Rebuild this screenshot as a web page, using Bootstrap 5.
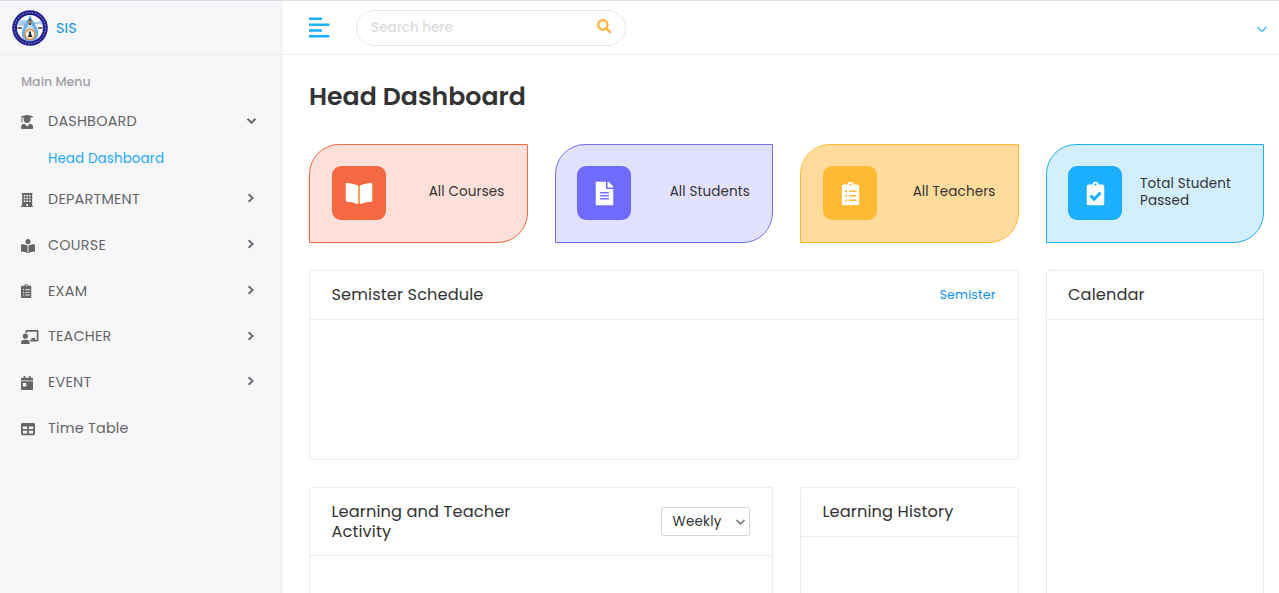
<!DOCTYPE html>
<html lang="en">
<head>
<meta charset="utf-8">
<meta name="viewport" content="width=device-width, initial-scale=1">
<title>SIS - Head Dashboard</title>
<link href="https://cdn.jsdelivr.net/npm/bootstrap@5.3.0/dist/css/bootstrap.min.css" rel="stylesheet">
<style>
body{font-family:Poppins,Inter,sans-serif;font-size:14.4px;color:#333;height:100vh;overflow:hidden;border-top:1px solid #d6e1ec}
a{text-decoration:none}
svg{display:block;flex:none}
.side{width:282px;background:#f7f7fa;border-right:1px solid #e9e9ee;color:#6f6f6f}
.brand-bar,.top-bar{height:54px;border-bottom:1px solid #eeeef2}
.brand-bar{padding-left:12px}
.brand-bar a{color:#0f94e8;margin:2px 0 0 8px;letter-spacing:.15px}
.menu-title{font-size:12.6px;font-weight:500;color:#a0a0a3;padding:17px 0 0 21px;height:43.7px;line-height:20px}
.menu-item{height:45.75px;padding:0 24px 0 21px;color:#666;letter-spacing:.21px}
.menu-item .ico{width:27px}
.menu-item .ico svg{height:14px;margin-top:0}
.menu-item .arrow{margin:-3px 1px 0 auto}
.menu-item .arrow.open{margin:-2px 0 0 auto}
.sub-item{height:32.5px;padding:4px 0 0 48px;color:#1eaaff;font-size:13.5px;line-height:21px;letter-spacing:.08px}
.top-bar{padding:0 11px 0 27px}
.search-box{width:270px;height:36px;border:1px solid #e6e6e6;border-radius:18px;margin-left:26px;padding:0 14px}
.search-box input{font-size:13.5px;font-weight:500;width:200px;margin-top:1px}
.search-box svg{margin-top:-2px}
.search-box input::placeholder{color:#dcdcdc;opacity:1}
.page-body{padding:0 15px 0 27px}
h1{font-size:25.2px;font-weight:600;line-height:30px;margin:27px 0 32px}
.grid-row{--bs-gutter-x:27px}
.stat{height:99px;border:1px solid;border-radius:30px 0;padding:0 22px 0 21.5px;margin-bottom:27px}
.stat .tile{width:54px;height:54px;border-radius:9px;flex:none;margin-top:-1px}
.stat .tile svg{transform:translate(.5px,.5px)}
.stat .label{font-size:13.5px;line-height:16.2px;color:#333;margin-top:-2px;letter-spacing:.12px}
.stat .label.two-line{margin-left:18px}
.s-red{background:#fde0d9;border-color:#f46b45}.s-red .tile{background:#f46842}
.s-violet{background:#e2e1ff;border-color:#7370f5}.s-violet .tile{background:#6f6bff}
.s-amber{background:#ffdc9b;border-color:#ffba35}.s-amber .tile{background:#ffba35}
.s-blue{background:#d2eeff;border-color:#1eb0f8}.s-blue .tile{background:#1aafff}
.panel{border:1px solid #ebebf3;border-radius:3px;background:#fff;margin-bottom:27px}
.panel-head{border-bottom:1px solid #ebebf0;padding:14px 22px 14px 21.5px;font-size:16.2px;line-height:20px;letter-spacing:.12px}
.panel-head a{font-size:12.6px;color:#1090ee}
.sched{height:190px}.cal{height:340px}.act,.hist{height:150px}
.act .panel-head{padding-bottom:13px}
.pick{width:89px;height:29px;border:1px solid #d9d9d9;border-radius:2px;padding:0 3px 0 10.5px;font-size:13.5px;letter-spacing:.2px;margin-top:-1px}
</style>
</head>
<body class="d-flex">
<svg width="0" height="0" class="position-absolute">
<symbol id="chev" viewBox="0 0 10 10"><path d="M2.6 1.2 6.6 5 2.6 8.8" fill="none" stroke="#6b6f73" stroke-width="2"/></symbol>
<symbol id="cliplist" viewBox="0 0 384 512"><path d="M336 64h-80c0-35.3-28.7-64-64-64s-64 28.7-64 64H48C21.5 64 0 85.5 0 112v352c0 26.5 21.5 48 48 48h288c26.5 0 48-21.5 48-48V112c0-26.5-21.5-48-48-48zM96 424c-13.3 0-24-10.7-24-24s10.7-24 24-24 24 10.7 24 24-10.7 24-24 24zm0-96c-13.3 0-24-10.7-24-24s10.7-24 24-24 24 10.7 24 24-10.7 24-24 24zm0-96c-13.3 0-24-10.7-24-24s10.7-24 24-24 24 10.7 24 24-10.7 24-24 24zm96-192c13.3 0 24 10.7 24 24s-10.7 24-24 24-24-10.7-24-24 10.7-24 24-24zm128 368c0 4.4-3.6 8-8 8H168c-4.4 0-8-3.6-8-8v-16c0-4.4 3.6-8 8-8h144c4.4 0 8 3.6 8 8v16zm0-96c0 4.4-3.6 8-8 8H168c-4.4 0-8-3.6-8-8v-16c0-4.4 3.6-8 8-8h144c4.4 0 8 3.6 8 8v16zm0-96c0 4.4-3.6 8-8 8H168c-4.4 0-8-3.6-8-8v-16c0-4.4 3.6-8 8-8h144c4.4 0 8 3.6 8 8v16z"/></symbol>
</svg>

<aside class="side flex-shrink-0">
  <div class="brand-bar d-flex align-items-center">
    <svg width="36" height="36" viewBox="0 0 36 36">
      <circle cx="18" cy="18" r="17.8" fill="#23208f"/>
      <circle cx="18" cy="18" r="15.5" fill="none" stroke="#aeadd8" stroke-width="1" stroke-dasharray="1.3 1.8"/>
      <circle cx="18" cy="18" r="13" fill="#fff"/>
      <path d="M7 11q5.500-2 11 0t11 0l1.500 4q-6-2-12.500 0t-12.500 0z" fill="#a9cdea"/>
      <path d="M18 5C14.500 13 9 18 9.800 25c1 8.500 15.400 8.500 16.400 0C27 18 21.500 13 18 5z" fill="#6eaee2"/>
      <path d="M18 11c-2 5-5 8-5.500 12h11c-.5-4-3.500-7-5.500-12z" fill="#c3e0f3"/>
      <path d="M18 8l1.500 3-.5 4h-2l-.5-4z" fill="#514846"/><path d="M17 11h2v2h-2z" fill="#e77b25"/>
      <circle cx="18" cy="24.500" r="5" fill="#fff" stroke="#e88a3e" stroke-width="1.600"/>
      <path d="M16.500 21.500h2.500v2l1.500 3.500h-5l1.500-3z" fill="#35312f"/>
      <path d="M5.500 17h4.500v2H5.500zM26 17h4.500v2H26z" fill="#746c73"/>
    </svg>
    <a href="#">SIS</a>
  </div>
  <div class="menu-title">Main Menu</div>
  <nav>
    <a class="menu-item d-flex align-items-center" href="#"><span class="ico"><svg viewBox="0 0 448 512" fill="currentColor"><path d="M319.4 320.6L224 416l-95.4-95.4C57.1 323.7 0 382.2 0 454.4v9.6c0 26.5 21.5 48 48 48h352c26.5 0 48-21.5 48-48v-9.6c0-72.2-57.1-130.7-128.6-133.8zM13.6 79.8l6.4 1.5v58.4c-7 4.2-12 11.5-12 20.3 0 8.4 4.6 15.4 11.1 19.7L3.5 242c-1.7 6.9 2.1 14 7.6 14h41.8c5.5 0 9.3-7.1 7.6-14l-15.6-62.3C51.4 175.4 56 168.4 56 160c0-8.8-5-16.1-12-20.3V87.1l66 15.9c-8.6 17.2-14 36.4-14 57 0 70.7 57.3 128 128 128s128-57.3 128-128c0-20.6-5.3-39.8-14-57l96.3-23.2c18.2-4.4 18.2-27.1 0-31.5l-190.4-46c-13-3.1-26.7-3.1-39.7 0L13.6 48.2c-18.1 4.4-18.1 27.2 0 31.6z"/></svg></span><span>DASHBOARD</span><svg class="arrow open" width="11" height="10" viewBox="0 0 11 10"><path d="M1.5 2.8 5.5 6.8 9.5 2.8" fill="none" stroke="#6b6b6b" stroke-width="2"/></svg></a>
    <a class="sub-item d-block" href="#">Head Dashboard</a>
    <a class="menu-item d-flex align-items-center" href="#"><span class="ico"><svg viewBox="0 0 448 512" fill="currentColor"><path fill-rule="evenodd" d="M24 0h400v40h-16v436h40v36H0v-36h40V40H24zM100 70v60h60v-60zm94 0v60h60v-60zm94 0v60h60v-60zM100 170v60h60v-60zm94 0v60h60v-60zm94 0v60h60v-60zM100 270v60h60v-60zm94 0v60h60v-60zm94 0v60h60v-60zM190 400v76h68v-76z"/></svg></span><span>DEPARTMENT</span><svg class="arrow" width="10" height="10"><use href="#chev"/></svg></a>
    <a class="menu-item d-flex align-items-center" href="#"><span class="ico"><svg viewBox="0 0 512 512" fill="currentColor"><path d="M352 96c0-53.02-42.98-96-96-96s-96 42.98-96 96 42.98 96 96 96 96-42.98 96-96zM233.59 241.1c-59.33-36.32-155.43-46.3-203.79-49.05C13.55 191.13 0 203.51 0 219.14v222.8c0 14.33 11.59 26.28 26.49 27.05 43.66 2.29 131.99 10.68 193.04 41.43 9.37 4.72 20.48-1.71 20.48-11.87V252.56c-.01-4.67-2.32-8.95-6.42-11.46zm248.61-49.05c-48.35 2.74-144.46 12.73-203.78 49.05-4.1 2.51-6.41 6.96-6.41 11.63v245.79c0 10.19 11.14 16.63 20.54 11.9 61.04-30.72 149.32-39.11 192.97-41.4 14.9-.78 26.49-12.73 26.49-27.06V219.14c-.01-15.63-13.56-28.01-29.81-27.09z"/></svg></span><span>COURSE</span><svg class="arrow" width="10" height="10"><use href="#chev"/></svg></a>
    <a class="menu-item d-flex align-items-center" href="#"><span class="ico"><svg width="10.5" height="14" fill="currentColor"><use href="#cliplist"/></svg></span><span>EXAM</span><svg class="arrow" width="10" height="10"><use href="#chev"/></svg></a>
    <a class="menu-item d-flex align-items-center" href="#"><span class="ico"><svg viewBox="0 0 640 512" fill="currentColor"><path d="M208 352c-2.39 0-4.78.35-7.06 1.09C187.98 357.3 174.35 360 160 360c-14.35 0-27.98-2.7-40.95-6.91-2.28-.74-4.66-1.09-7.05-1.09C49.94 352-.33 402.48 0 464.62.14 490.88 21.73 512 48 512h224c26.27 0 47.86-21.12 48-47.38.33-62.14-49.94-112.62-112-112.62zm-48-32c53.02 0 96-42.98 96-96s-42.98-96-96-96-96 42.98-96 96 42.98 96 96 96zM592 0H208c-26.47 0-48 22.25-48 49.59V96c23.42 0 45.1 6.78 64 17.8V64h352v288h-64v-64H384v64h-76.24c19.1 16.69 33.12 38.73 39.69 64H592c26.47 0 48-22.25 48-49.59V49.59C640 22.25 618.47 0 592 0z"/></svg></span><span>TEACHER</span><svg class="arrow" width="10" height="10"><use href="#chev"/></svg></a>
    <a class="menu-item d-flex align-items-center" href="#"><span class="ico"><svg viewBox="0 0 448 512" fill="currentColor"><path d="M0 464c0 26.5 21.5 48 48 48h352c26.5 0 48-21.5 48-48V192H0v272zm64-192c0-8.8 7.2-16 16-16h96c8.8 0 16 7.2 16 16v96c0 8.8-7.2 16-16 16H80c-8.8 0-16-7.2-16-16v-96zM400 64h-48V16c0-8.8-7.2-16-16-16h-32c-8.8 0-16 7.2-16 16v48H160V16c0-8.8-7.2-16-16-16h-32c-8.8 0-16 7.2-16 16v48H48C21.5 64 0 85.5 0 112v48h448v-48c0-26.5-21.5-48-48-48z"/></svg></span><span>EVENT</span><svg class="arrow" width="10" height="10"><use href="#chev"/></svg></a>
    <a class="menu-item d-flex align-items-center" href="#"><span class="ico"><svg viewBox="0 0 512 512" fill="currentColor"><path d="M464 32H48C21.49 32 0 53.49 0 80v352c0 26.51 21.49 48 48 48h416c26.51 0 48-21.49 48-48V80c0-26.51-21.49-48-48-48zM224 416H64v-96h160v96zm0-160H64v-96h160v96zm224 160H288v-96h160v96zm0-160H288v-96h160v96z"/></svg></span><span>Time Table</span></a>
  </nav>
</aside>

<main class="flex-grow-1 overflow-hidden">
  <header class="top-bar d-flex align-items-center">
    <svg width="21" height="22" fill="#1aafff"><path d="M0 .5h13v2.400H0zM0 6.500h20.500v2.400H0zM0 12.300h13v2.400H0zM0 18.100h20.500v2.400H0z"/></svg>
    <div class="search-box d-flex align-items-center justify-content-between">
      <input class="border-0 p-0 bg-transparent" type="text" placeholder="Search here">
      <svg width="14.4" height="14.4" viewBox="0 0 512 512" fill="#ffb446"><path d="M505 442.7L405.3 343c-4.500-4.500-10.600-7-17-7H372c27.600-35.300 44-79.700 44-128C416 93.100 322.900 0 208 0S0 93.100 0 208s93.100 208 208 208c48.300 0 92.700-16.400 128-44v16.300c0 6.400 2.500 12.500 7 17l99.700 99.700c9.400 9.400 24.600 9.400 33.900 0l28.300-28.300c9.400-9.400 9.400-24.600.1-34zM208 336c-70.700 0-128-57.200-128-128 0-70.700 57.200-128 128-128 70.700 0 128 57.200 128 128 0 70.700-57.200 128-128 128z"/></svg>
    </div>
    <svg class="ms-auto mt-1" width="12" height="8" viewBox="0 0 12 8"><path d="M1.5 1 6 5.500 10.500 1" fill="none" stroke="#35b3f5" stroke-width="1.200"/></svg>
  </header>

  <div class="page-body">
    <h1>Head Dashboard</h1>
    <div class="row grid-row">
      <div class="col-3"><div class="stat s-red d-flex align-items-center justify-content-between">
        <div class="tile d-flex align-items-center justify-content-center"><svg width="27" height="24" viewBox="0 0 576 512" fill="#fff"><path d="M542.22 32.05c-54.8 3.11-163.72 14.43-230.96 55.59-4.64 2.84-7.27 7.89-7.27 13.17v363.87c0 11.55 12.63 18.85 23.28 13.49 69.18-34.82 169.23-44.32 218.7-46.92 16.89-.89 30.02-14.43 30.02-30.66V62.75c.01-17.71-15.35-31.74-33.77-30.7zM264.73 87.64C197.5 46.48 88.58 35.17 33.78 32.05 15.36 31.01 0 45.04 0 62.75V400.6c0 16.24 13.13 29.78 30.02 30.66 49.49 2.6 149.59 12.11 218.77 46.95 10.62 5.35 23.21-1.94 23.21-13.46V100.63c0-5.29-2.62-10.14-7.27-12.99z"/><path d="M272 95h26v375h-26z" fill="#ffb347"/></svg></div>
        <div class="label">All Courses</div></div></div>
      <div class="col-3"><div class="stat s-violet d-flex align-items-center justify-content-between">
        <div class="tile d-flex align-items-center justify-content-center"><svg width="18" height="24" viewBox="0 0 384 512" fill="#fff"><path d="M224 136V0H24C10.7 0 0 10.7 0 24v464c0 13.3 10.7 24 24 24h336c13.3 0 24-10.7 24-24V160H248c-13.2 0-24-10.8-24-24zm64 236c0 6.600-5.400 12-12 12H108c-6.600 0-12-5.400-12-12v-8c0-6.600 5.400-12 12-12h168c6.600 0 12 5.400 12 12v8zm0-64c0 6.600-5.400 12-12 12H108c-6.600 0-12-5.400-12-12v-8c0-6.600 5.400-12 12-12h168c6.600 0 12 5.400 12 12v8zm0-72v8c0 6.600-5.400 12-12 12H108c-6.600 0-12-5.400-12-12v-8c0-6.600 5.400-12 12-12h168c6.600 0 12 5.400 12 12zm96-114.100v6.100H256V0h6.100c6.400 0 12.500 2.500 17 7l97.900 98c4.500 4.500 7 10.600 7 16.900z"/></svg></div>
        <div class="label">All Students</div></div></div>
      <div class="col-3"><div class="stat s-amber d-flex align-items-center justify-content-between">
        <div class="tile d-flex align-items-center justify-content-center"><svg width="18" height="24" fill="#fff"><use href="#cliplist"/></svg></div>
        <div class="label">All Teachers</div></div></div>
      <div class="col-3"><div class="stat s-blue d-flex align-items-center">
        <div class="tile d-flex align-items-center justify-content-center"><svg width="18" height="24" viewBox="0 0 384 512" fill="#fff"><path d="M336 64h-80c0-35.300-28.700-64-64-64s-64 28.700-64 64H48C21.500 64 0 85.500 0 112v352c0 26.500 21.500 48 48 48h288c26.500 0 48-21.500 48-48V112c0-26.500-21.500-48-48-48zM192 40c13.300 0 24 10.700 24 24s-10.700 24-24 24-24-10.700-24-24 10.700-24 24-24zm121.200 231.800l-143 141.800c-4.700 4.700-12.300 4.600-17-.1l-82.600-83.300c-4.700-4.700-4.600-12.300.1-17L99.100 285c4.700-4.700 12.300-4.600 17 .1l46 46.400 106-105.200c4.700-4.700 12.300-4.600 17 .1l28.200 28.400c4.700 4.800 4.600 12.300-.1 17z"/></svg></div>
        <div class="label two-line">Total Student<br>Passed</div></div></div>
    </div>
    <div class="row grid-row">
      <div class="col-9">
        <section class="panel sched"><div class="panel-head d-flex justify-content-between align-items-center"><span>Semister Schedule</span><a href="#">Semister</a></div></section>
        <div class="row grid-row">
          <div class="col-8"><section class="panel act"><div class="panel-head d-flex justify-content-between align-items-center"><span>Learning and Teacher<br>Activity</span>
            <div class="pick d-flex align-items-center justify-content-between" role="button">Weekly <svg width="11" height="8" viewBox="0 0 11 8"><path d="M1.5 2 5.500 5.800 9.500 2" fill="none" stroke="#757575" stroke-width="1.600"/></svg></div></div></section></div>
          <div class="col-4"><section class="panel hist"><div class="panel-head">Learning History</div></section></div>
        </div>
      </div>
      <div class="col-3"><section class="panel cal"><div class="panel-head">Calendar</div></section></div>
    </div>
  </div>
</main>
<script src="https://cdn.jsdelivr.net/npm/bootstrap@5.3.0/dist/js/bootstrap.bundle.min.js"></script>
</body>
</html>
